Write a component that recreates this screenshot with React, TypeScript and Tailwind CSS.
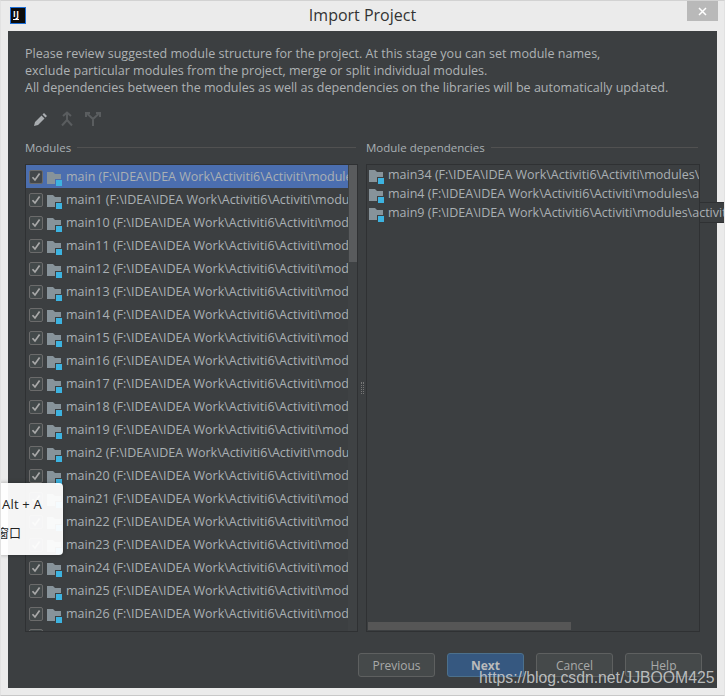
import React from 'react';

const font = "font-['Open_Sans',sans-serif]";

const modules = [
  'main', 'main1', 'main10', 'main11', 'main12', 'main13', 'main14', 'main15', 'main16', 'main17', 'main18', 'main19',
  'main2', 'main20', 'main21', 'main22', 'main23', 'main24', 'main25', 'main26',
];

const deps = [
  { name: 'main34', path: 'modules\\activiti-engine', clip: true },
  { name: 'main4', path: 'modules\\activiti-bpmn', clip: true },
  { name: 'main9', path: 'modules\\activiti', clip: false },
];

function ModuleIcon({ up }: { up?: boolean }) {
  return (
    <svg width="16" height="18" viewBox="0 0 16 18" className={`shrink-0 ${up ? '-mt-[2px]' : ''}`}>
      <path d="M0 4h6l2 2h6v5H8v5H0z" fill="#87939a" />
      <rect x="9" y="12" width="6" height="6" fill="#3db3e0" />
    </svg>
  );
}

function Check({ selected }: { selected?: boolean }) {
  return (
    <span className={`flex h-[14px] w-[14px] shrink-0 items-center justify-center rounded-[2px] border border-[#6b6b6b] ${selected ? 'bg-[#43474a]' : 'bg-[#43494a]'}`}>
      <svg width="10" height="10" viewBox="0 0 10 10">
        <path d="M1.500 5.200 4 8 8.600 1.600" fill="none" stroke="#a9a9a9" strokeWidth="1.7" />
      </svg>
    </span>
  );
}

function SectionTitle({ title }: { title: string }) {
  return (
    <div className="flex h-[17px] items-center gap-[6px] pr-[2px]">
      <span className="text-[11.5px] text-[#a9b0b4]">{title}</span>
      <div className="h-px flex-1 bg-[#515151]" />
    </div>
  );
}

function Btn({ label, primary }: { label: string; primary?: boolean }) {
  return (
    <button
      className={`h-[24px] w-[77px] rounded-[3px] border pt-[1px] text-[12px] ${
        primary ? 'border-[#4c708c] bg-[#365880] font-bold text-[#bbbbbb]' : 'border-[#5e6060] bg-[#45494a] text-[#a9a9a9]'
      }`}
    >
      {label}
    </button>
  );
}

export default function App() {
  return (
    <div className={`relative h-[696px] w-[725px] overflow-hidden border border-b-[#c8c8c8] border-x-[#e2e2e2] border-t-[#d2d2d2] bg-[#ebebeb] ${font}`}>
      {/* title bar */}
      <div className="relative flex h-[30px] items-center justify-center pb-[2px]">
        <div className="absolute left-[9px] top-[6px] flex h-[17px] w-[16px] flex-col border border-[#1d6fd8] bg-[#0c0c0c] px-[2px] pt-[1px]">
          <span className="text-[8px] font-bold leading-[9px] tracking-[0.5px] text-white">IJ</span>
          <span className="mt-[1px] h-px w-[6px] bg-white" />
        </div>
        <span className="text-[16px] text-[#333333]">Import Project</span>
        <div className="absolute right-[6px] top-0 flex h-[20px] w-[31px] items-center justify-center bg-[#b9b9b9]">
          <svg width="9" height="9" viewBox="0 0 9 9">
            <path d="M1 1l7 7M8 1 1 8" stroke="#fff" strokeWidth="1.5" />
          </svg>
        </div>
      </div>

      {/* dialog body */}
      <div className="mx-[7px] flex h-[657px] w-[709px] flex-col bg-[#3c3f41] px-[17px] pt-[14px]">
        <div className="text-[12.56px] leading-[17px] text-[#aeb2b4]">
          <p>Please review suggested module structure for the project. At this stage you can set module names,</p>
          <p>exclude particular modules from the project, merge or split individual modules.</p>
          <p>All dependencies between the modules as well as dependencies on the libraries will be automatically updated.</p>
        </div>

        {/* toolbar */}
        <div className="mt-[13px] flex h-[20px] items-center pl-[8px]">
          <svg width="15" height="15" viewBox="0 0 15 15">
            <path d="M1 14l1-4 6.500-6.500 3 3L5 13z M9.500 2.500 11 1l3 3-1.500 1.500z" fill="#a9adb0" />
          </svg>
          <svg width="14" height="16" viewBox="0 0 14 16" className="ml-[12px]" fill="none" stroke="#5a5d5f" strokeWidth="2">
            <path d="M3 5 7 1.500 11 5M7 2v7M7 9 2 14.500M7 9l5 5.500" />
          </svg>
          <svg width="16" height="16" viewBox="0 0 16 16" className="ml-[11px]" fill="none" stroke="#5a5d5f" strokeWidth="2">
            <path d="M8 15V8M8 8 2.500 3M8 8l5.500-5M1 6V2h4M11 2h4v4" />
          </svg>
        </div>

        <div className="mt-[10px] flex">
          {/* modules */}
          <div className="w-[333px]">
            <SectionTitle title="Modules" />
            <div className="mt-[8px] flex h-[468px] border border-[#2f3133]">
              <div className="w-[322px] overflow-hidden">
                {modules.map((m, i) => (
                  <div key={m} className={`flex h-[23px] items-center whitespace-nowrap pl-[3px] ${i === 0 ? 'bg-[#4b6eaf]' : ''}`}>
                    <Check selected={i === 0} />
                    <span className="ml-[4px] flex"><ModuleIcon /></span>
                    <span className="ml-[3px] pt-[2px] text-[12.5px] text-[#aab0b4]">
                      {m} (F:\IDEA\IDEA Work\Activiti6\Activiti\modules\activiti-{m})
                    </span>
                  </div>
                ))}
                <div className="ml-[3px] mt-[4px] h-[14px] w-[14px] rounded-[2px] border border-[#6b6b6b] bg-[#43494a]" />
              </div>
              <div className="flex-1 bg-[#3f4244] pl-[1px]">
                <div className="h-[97px] w-[8px] bg-[#595b5d]" />
              </div>
            </div>
          </div>

          {/* splitter */}
          <div className="relative w-[8px]">
            <div className="absolute left-[3px] top-[243px] h-[12px] w-[3px] border-x border-dotted border-[#777777]" />
          </div>

          {/* dependencies */}
          <div className="w-[334px]">
            <SectionTitle title="Module dependencies" />
            <div className="relative mt-[8px] flex h-[468px] w-[334px] flex-col justify-between border border-[#2f3133] pb-[1px] pt-[1px]">
              {/* expandable value tip behind the third row */}
              <div className="absolute left-[332px] top-[37px] h-[21px] w-[30px] border border-[#2f3133] bg-[#3c3f41]" />
              <div className="relative">
                {deps.map((d) => (
                  <div key={d.name} className={`flex h-[19px] items-center whitespace-nowrap pl-[2px] ${d.clip ? 'overflow-hidden' : ''}`}>
                    <ModuleIcon up />
                    <span className="ml-[3px] text-[12.5px] text-[#aab0b4]">
                      {d.name} (F:\IDEA\IDEA Work\Activiti6\Activiti\{d.path})
                    </span>
                  </div>
                ))}
              </div>
              <div className="ml-[1px] h-[8px] w-[203px] bg-[#565656]" />
            </div>
          </div>
        </div>

        {/* buttons */}
        <div className="-mr-[2px] mt-[21px] flex justify-end gap-[12px]">
          <Btn label="Previous" />
          <Btn label="Next" primary />
          <Btn label="Cancel" />
          <Btn label="Help" />
        </div>
      </div>

      {/* screenshot tool hint */}
      <div className="absolute left-[-1px] top-[482px] flex h-[72px] w-[63px] flex-col items-end overflow-hidden whitespace-nowrap rounded-r-[4px] bg-white/95 pr-[21px] font-['Noto_Sans_CJK_SC',sans-serif] text-[12px] text-[#222222] shadow-[0_0_4px_rgba(0,0,0,0.3)]">
        <span className="mt-[12px] font-['Open_Sans',sans-serif] text-[13px] tracking-[0.2px]">Alt + A</span>
        <span className="mt-[9px] translate-x-[-21px]">隐藏当前窗口</span>
      </div>

      {/* watermark */}
      <div className="absolute left-[478px] top-[667px] font-['Liberation_Sans',sans-serif] text-[15.75px] leading-[20px] text-[#c9cbcc]/90">
        https://blog.csdn.net/JJBOOM425
      </div>
    </div>
  );
}
